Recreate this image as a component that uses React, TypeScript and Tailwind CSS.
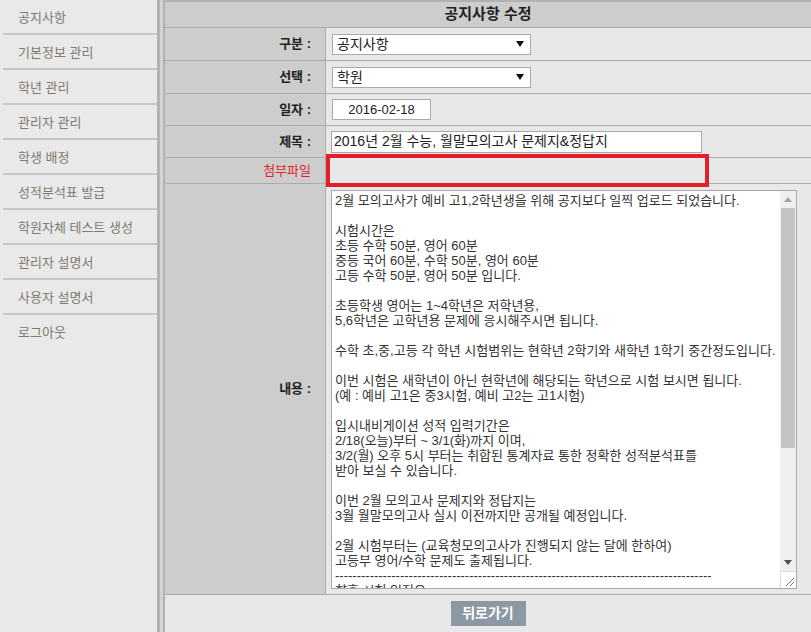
import React from "react";

const menu = [
  "공지사항",
  "기본정보 관리",
  "학년 관리",
  "관리자 관리",
  "학생 배정",
  "성적분석표 발급",
  "학원자체 테스트 생성",
  "관리자 설명서",
  "사용자 설명서",
  "로그아웃",
];

const body = [
  "2월 모의고사가 예비 고1,2학년생을 위해 공지보다 일찍 업로드 되었습니다.",
  "",
  "시험시간은",
  "초등 수학 50분, 영어 60분",
  "중등 국어 60분, 수학 50분, 영어 60분",
  "고등 수학 50분, 영어 50분 입니다.",
  "",
  "초등학생 영어는 1~4학년은 저학년용,",
  "5,6학년은 고학년용 문제에 응시해주시면 됩니다.",
  "",
  "수학 초,중,고등 각 학년 시험범위는 현학년 2학기와 새학년 1학기 중간정도입니다.",
  "",
  "이번 시험은 새학년이 아닌 현학년에 해당되는 학년으로 시험 보시면 됩니다.",
  "(예 : 예비 고1은 중3시험, 예비 고2는 고1시험)",
  "",
  "입시내비게이션 성적 입력기간은",
  "2/18(오늘)부터 ~ 3/1(화)까지 이며,",
  "3/2(월) 오후 5시 부터는 취합된 통계자료 통한 정확한 성적분석표를",
  "받아 보실 수 있습니다.",
  "",
  "이번 2월 모의고사 문제지와 정답지는",
  "3월 월말모의고사 실시 이전까지만 공개될 예정입니다.",
  "",
  "2월 시험부터는 (교육청모의고사가 진행되지 않는 달에 한하여)",
  "고등부 영어/수학 문제도 출제됩니다.",
  "---------------------------------------------------------------------------------------",
  "향후 시험 일정은",
];

function Arrow() {
  return (
    <svg width="8" height="6" viewBox="0 0 8 6">
      <path d="M0 0 H8 L4 6 Z" fill="#111" />
    </svg>
  );
}

function Row({
  label,
  red,
  h,
  children,
}: {
  label: string;
  red?: boolean;
  h: string;
  children?: React.ReactNode;
}) {
  return (
    <div className={`flex ${h} border-b border-[#ababab]`}>
      <div
        className={`flex w-[161px] shrink-0 items-center justify-end border-r border-[#ababab] bg-[#cdcdcd] pr-[14px] text-[13px] ${
          red ? "text-[#e0242a]" : "font-bold text-[#222]"
        }`}
      >
        {label}
      </div>
      <div className="flex flex-1 items-center bg-[#e8e8e8]">{children}</div>
    </div>
  );
}

export default function App() {
  return (
    <div className="relative flex h-[632px] w-[811px] overflow-hidden bg-[#e9e9e9] font-['Liberation_Sans','Noto_Sans_CJK_KR',sans-serif]">
      {/* sidebar */}
      <div className="flex w-[157px] shrink-0 flex-col bg-[#e9e9e9]">
        {menu.map((m, i) => (
          <div key={m} className="flex flex-col">
            <div className="flex h-[33px] items-center pl-[18px] pt-[3px] text-[13px] text-[#81796f]">
              {m}
            </div>
            {i < menu.length - 1 && <div className="ml-[3px] h-[2px] bg-[#c6c6c6]" />}
          </div>
        ))}
      </div>
      <div className="w-[3px] shrink-0 bg-[#b2b2b2]" />
      <div className="w-[3px] shrink-0 bg-[#d3d3d3]" />

      {/* main */}
      <div className="flex flex-1 flex-col border-l-2 border-t-2 border-[#b2b2b2]">
        <div className="flex h-[26px] items-center justify-center border-b border-[#ababab] bg-[#cdcdcd] text-[15px] font-bold text-[#222]">
          공지사항 수정
        </div>
        <Row label="구분 :" h="h-[33px]">
          <div className="ml-[6px] flex h-[21px] w-[199px] items-center justify-between border border-[#a9a9a9] bg-white pl-[4px] pr-[6px] text-[14px] text-[#222]">
            <span>공지사항</span>
            <Arrow />
          </div>
        </Row>
        <Row label="선택 :" h="h-[33px]">
          <div className="ml-[6px] flex h-[21px] w-[199px] items-center justify-between border border-[#a9a9a9] bg-white pl-[4px] pr-[6px] text-[14px] text-[#222]">
            <span>학원</span>
            <Arrow />
          </div>
        </Row>
        <Row label="일자 :" h="h-[32px]">
          <div className="ml-[6px] flex h-[21px] w-[99px] items-center justify-center border border-[#a9a9a9] bg-white text-[13px] text-[#222]">
            2016-02-18
          </div>
        </Row>
        <Row label="제목 :" h="h-[32px]">
          <div className="ml-[5px] flex h-[22px] w-[371px] items-center border border-[#a9a9a9] bg-white pl-[2px] text-[14px] text-[#222]">
            2016년 2월 수능, 월말모의고사 문제지&amp;정답지
          </div>
        </Row>
        <Row label="첨부파일" red h="h-[26px]" />
        <div className="flex h-[411px] border-b border-[#ababab]">
          <div className="flex w-[161px] shrink-0 items-center justify-end border-r border-[#ababab] bg-[#cdcdcd] pr-[14px] text-[13px] font-bold text-[#222]">
            내용 :
          </div>
          <div className="flex flex-1 items-start bg-[#e8e8e8] pl-[5px] pt-[6px]">
            <div className="flex h-[399px] w-[466px] border border-[#a9a9a9] bg-white">
              <div className="flex-1 overflow-hidden pl-[3px] pt-[2px] text-[13px] leading-[15px] text-[#333]">
                {body.map((l, i) => (
                  <div key={i} className="h-[15px] whitespace-pre">
                    {l}
                  </div>
                ))}
              </div>
              <div className="flex w-[16px] shrink-0 flex-col bg-[#f0f0f0]">
                <div className="flex h-[17px] items-center justify-center">
                  <svg width="8" height="5" viewBox="0 0 8 5">
                    <path d="M0 5 H8 L4 0 Z" fill="#a3a3a3" />
                  </svg>
                </div>
                <div className="flex flex-1 flex-col px-[1px]">
                  <div className="h-[240px] bg-[#c4c4c4]" />
                </div>
                <div className="flex h-[17px] items-center justify-center">
                  <svg width="8" height="5" viewBox="0 0 8 5">
                    <path d="M0 0 H8 L4 5 Z" fill="#505050" />
                  </svg>
                </div>
                <div className="flex h-[17px] items-end justify-end border-l border-t border-[#dcdcdc] bg-white p-[2px]">
                  <svg width="9" height="9" viewBox="0 0 9 9">
                    <path d="M1 9 L9 1 M5 9 L9 5" stroke="#777" strokeWidth="1" />
                  </svg>
                </div>
              </div>
            </div>
          </div>
        </div>
        <div className="flex flex-1 items-start justify-center bg-[#e8e8e8] pt-[6px]">
          <div className="flex h-[25px] w-[75px] items-center justify-center bg-[#8c98a3] text-[14px] font-bold text-white">
            뒤로가기
          </div>
        </div>
      </div>

      {/* red annotation box */}
      <div className="absolute left-[326px] top-[154px] h-[33px] w-[383px] border-4 border-[#e3202a]" />
    </div>
  );
}
